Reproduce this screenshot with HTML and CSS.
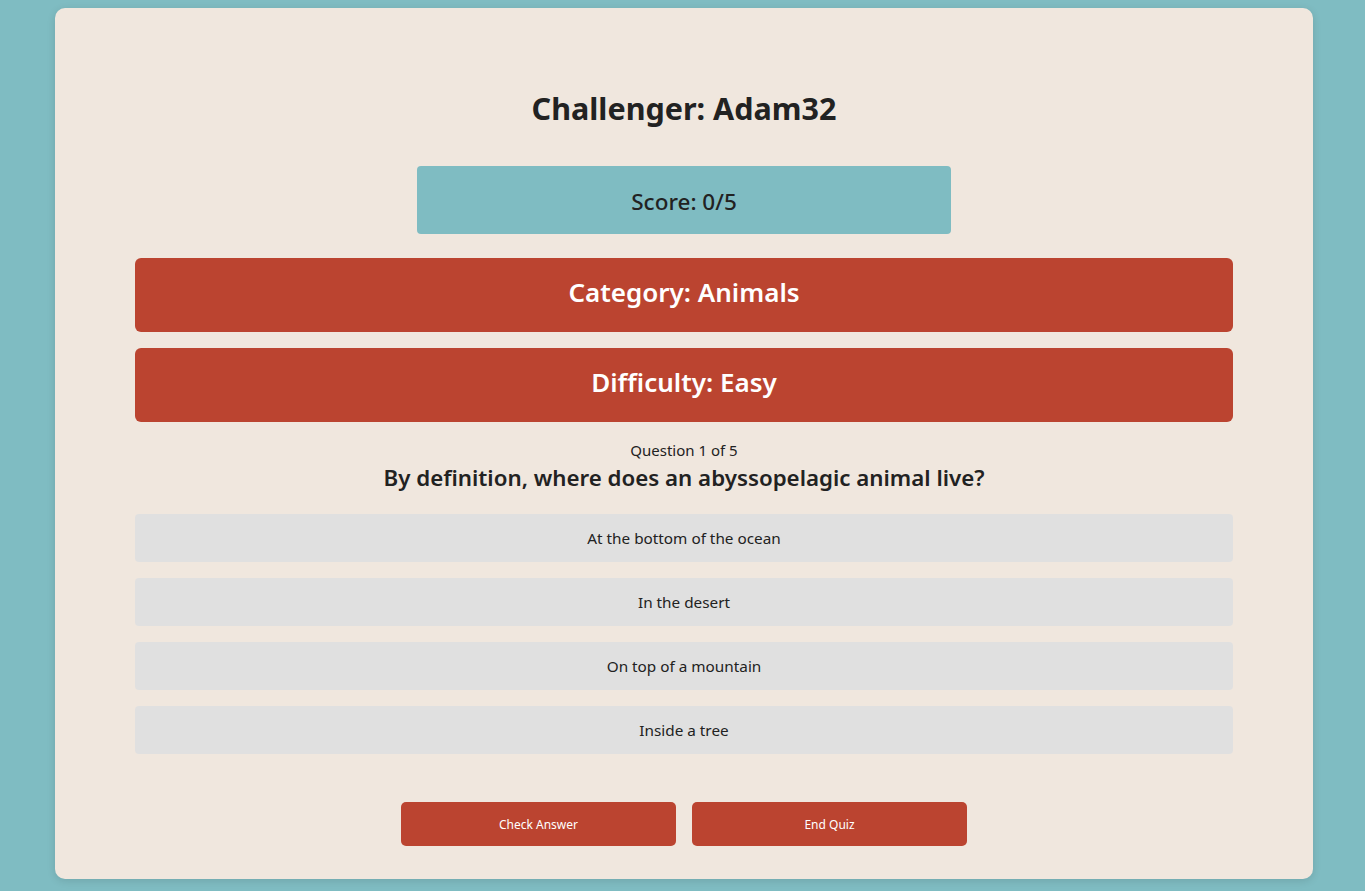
FILE: index.html
```html
<!DOCTYPE html>
<html lang="en">
<head>
<meta charset="utf-8">
<title>Quiz</title>
<link rel="stylesheet" href="styles.css">
</head>
<body>
<main class="card">
  <h1 class="challenger">Challenger: Adam32</h1>
  <div class="score">Score: 0/5</div>
  <div class="banner banner-category">Category: Animals</div>
  <div class="banner banner-difficulty">Difficulty: Easy</div>
  <p class="count">Question 1 of 5</p>
  <h2 class="question">By definition, where does an abyssopelagic animal live?</h2>
  <div class="options">
    <button class="option">At the bottom of the ocean</button>
    <button class="option">In the desert</button>
    <button class="option">On top of a mountain</button>
    <button class="option">Inside a tree</button>
  </div>
  <div class="actions">
    <button class="action">Check Answer</button>
    <button class="action">End Quiz</button>
  </div>
</main>
</body>
</html>
```

FILE: styles.css
```css
html, body {
  margin: 0;
  padding: 0;
}
body {
  background: #7fbcc2;
  font-family: "Noto Sans", "Open Sans", sans-serif;
  color: #222;
  padding: 8px 0 12px;
}
.card {
  width: 1258px;
  box-sizing: border-box;
  margin: 0 auto 0 55px;
  background: #f0e7de;
  border-radius: 10px;
  box-shadow: 0 2px 8px rgba(0, 0, 0, 0.12);
  padding: 79px 80px 33px;
  display: flex;
  flex-direction: column;
  align-items: center;
}
.challenger {
  margin: 0 0 37px;
  font-size: 30.5px;
  line-height: 42px;
  font-weight: 700;
  color: #222;
}
.score {
  width: 534px;
  height: 68px;
  background: #7fbcc2;
  border-radius: 4px;
  display: flex;
  align-items: center;
  justify-content: center;
  font-size: 22.5px;
  font-weight: 500;
  color: #222;
  margin-bottom: 24px;
  padding-top: 2px;
  box-sizing: border-box;
}
.banner {
  align-self: stretch;
  height: 74px;
  background: #bb4430;
  color: #fff;
  border-radius: 6px;
  display: flex;
  align-items: center;
  justify-content: center;
  font-size: 26px;
  font-weight: 600;
  padding-bottom: 7px;
  box-sizing: border-box;
}
.banner-category {
  margin-bottom: 16px;
}
.count {
  margin: 18px 0 3px;
  font-size: 15px;
  line-height: 20px;
}
.question {
  margin: 0 0 21px;
  font-size: 22.3px;
  line-height: 30px;
  font-weight: 600;
}
.options {
  align-self: stretch;
  display: flex;
  flex-direction: column;
  gap: 16px;
}
.option {
  height: 48px;
  border: none;
  border-radius: 4px;
  background: #e0e0e0;
  color: #222;
  font-family: inherit;
  font-size: 15.3px;
  padding: 0;
}
.actions {
  display: flex;
  gap: 16px;
  margin-top: 48px;
}
.action {
  width: 275px;
  height: 44px;
  border: none;
  border-radius: 5px;
  background: #bb4430;
  color: #fff;
  font-family: inherit;
  font-size: 12px;
  padding: 0;
}
```
